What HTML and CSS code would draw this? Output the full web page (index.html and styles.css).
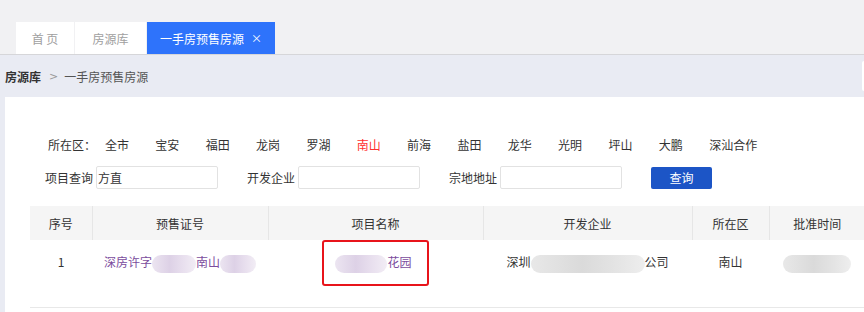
FILE: index.html
```html
<!DOCTYPE html>
<html lang="zh-CN">
<head>
    <meta charset="UTF-8" />
    <title>一手房预售房源</title>
    <link rel="stylesheet" href="styles.css">
</head>
<body>
    <header class="tabbar">
        <a class="tab">首&nbsp;页</a>
        <a class="tab tab-wide">房源库</a>
        <a class="tab tab-active">一手房预售房源 <span class="tab-close">×</span></a>
    </header>

    <div class="crumbs">
        <div class="crumb-path">
            <span class="crumb-root">房源库</span>
            <span class="crumb-sep">&gt;</span>
            <span class="crumb-current">一手房预售房源</span>
        </div>
        <div class="crumb-edge"></div>
    </div>

    <main class="panel">
        <div class="filters">
            <div class="district-row">
                <span class="district-label">所在区：</span>
                <a class="district">全市</a>
                <a class="district">宝安</a>
                <a class="district">福田</a>
                <a class="district">龙岗</a>
                <a class="district">罗湖</a>
                <a class="district active">南山</a>
                <a class="district">前海</a>
                <a class="district">盐田</a>
                <a class="district">龙华</a>
                <a class="district">光明</a>
                <a class="district">坪山</a>
                <a class="district">大鹏</a>
                <a class="district">深汕合作</a>
            </div>
            <div class="search-row">
                <label class="field">项目查询<input type="text" value="方直"></label>
                <label class="field">开发企业<input type="text"></label>
                <label class="field">宗地地址<input type="text"></label>
                <button class="search-btn">查询</button>
            </div>
        </div>

        <table class="results">
            <thead>
                <tr>
                    <th class="col-no">序号</th>
                    <th class="col-cert">预售证号</th>
                    <th class="col-name">项目名称</th>
                    <th class="col-dev">开发企业</th>
                    <th class="col-area">所在区</th>
                    <th class="col-date">批准时间</th>
                </tr>
            </thead>
            <tbody>
                <tr>
                    <td>1</td>
                    <td><a class="link">深房许字<span class="blur blur-purple" style="width:44px"></span>南山<span class="blur blur-purple" style="width:36px"></span></a></td>
                    <td><span class="mark"><a class="link"><span class="blur blur-purple" style="width:52px"></span>花园</a></span></td>
                    <td>深圳<span class="blur blur-gray" style="width:114px"></span>公司</td>
                    <td>南山</td>
                    <td><span class="blur blur-gray" style="width:68px"></span></td>
                </tr>
            </tbody>
        </table>
    </main>
</body>
</html>
```

FILE: styles.css
```css
* {
    margin: 0;
    padding: 0;
    box-sizing: border-box;
}

body {
    font-family: "Noto Sans CJK SC", "Noto Sans", sans-serif;
    font-size: 12px;
    color: #333;
    background-color: #e9ebf3;
    width: 864px;
    height: 312px;
    overflow: hidden;
}

/* Tabs */
.tabbar {
    display: flex;
    align-items: flex-end;
    gap: 1px;
    height: 55px;
    padding-left: 16px;
    background-color: #f1f1f3;
    border-bottom: 1px solid #d6d6d9;
}

.tab {
    display: flex;
    align-items: center;
    justify-content: center;
    width: 58px;
    height: 32px;
    background-color: #fff;
    color: #a0a0a0;
    font-size: 12px;
}

.tab-wide {
    width: 71px;
}

.tab-active {
    width: 128px;
    background-color: #2e73fb;
    color: #fff;
    gap: 7px;
}

.tab-close {
    font-size: 11px;
}

/* Breadcrumb */
.crumbs {
    display: flex;
    justify-content: space-between;
    align-items: center;
    height: 42px;
    padding-left: 5px;
}

.crumb-path {
    display: flex;
    align-items: center;
}

.crumb-root {
    font-weight: 700;
    color: #333;
}

.crumb-sep {
    margin: 0 6px 0 8px;
    color: #999;
    font-family: "DejaVu Sans", sans-serif;
    font-size: 11px;
}

.crumb-current {
    color: #555;
}

.crumb-edge {
    width: 2px;
    height: 30px;
    background-color: #fff;
    border-radius: 2px 0 0 2px;
}

/* Content panel */
.panel {
    margin-left: 5px;
    height: 215px;
    background-color: #fff;
    padding-top: 36px;
}

.filters {
    display: flex;
    flex-direction: column;
    gap: 11px;
}

.district-row {
    display: flex;
    align-items: center;
    height: 22px;
    padding-left: 43px;
}

.district-label {
    width: 57px;
}

.district {
    margin-right: 26.33px;
    color: #333;
}

.district.active {
    color: #ff2e2e;
}

.search-row {
    display: flex;
    align-items: center;
    gap: 29px;
    padding-left: 40px;
}

.field {
    display: flex;
    align-items: center;
    gap: 3px;
}

.field input {
    width: 122px;
    height: 23px;
    border: 1px solid #e2e2e2;
    border-radius: 2px;
    padding-left: 1px;
    font-family: inherit;
    font-size: 12px;
    color: #333;
    outline: none;
}

.search-btn {
    width: 61px;
    height: 22px;
    border: none;
    border-radius: 2px;
    background-color: #1c55c6;
    color: #fff;
    font-family: inherit;
    font-size: 12px;
}

/* Table */
.results {
    margin: 17px 0 0 25px;
    width: 835px;
    border-collapse: collapse;
    table-layout: fixed;
}

.results th {
    height: 34px;
    background-color: #f5f5f5;
    font-weight: 400;
    color: #333;
    border-left: 1px solid #e6e6e6;
}

.results th:first-child {
    border-left: none;
}

.col-no { width: 62px; }
.col-cert { width: 176px; }
.col-name { width: 215px; }
.col-dev { width: 209px; }
.col-area { width: 77px; }
.col-date { width: 96px; }

.results td {
    height: 67px;
    vertical-align: top;
    padding-top: 13px;
    text-align: center;
    line-height: 18px;
    border-bottom: 1px solid #e8e8e8;
    white-space: nowrap;
}

.link {
    color: #7b4c9d;
}

.blur {
    display: inline-block;
    height: 18px;
    vertical-align: middle;
    border-radius: 9px;
}

.blur-purple {
    background: linear-gradient(90deg, #ece5f1, #ddd1e6 40%, #e8dfee 70%, #f2edf5);
}

.blur-gray {
    background: linear-gradient(90deg, #e8e8e8, #dadada 45%, #e4e4e4 75%, #eeeeee);
}

.mark {
    display: inline-block;
    margin-top: -13px;
    padding: 11px 15px 11px 11px;
    border: 2px solid #e8141b;
    border-radius: 3px;
}
```
